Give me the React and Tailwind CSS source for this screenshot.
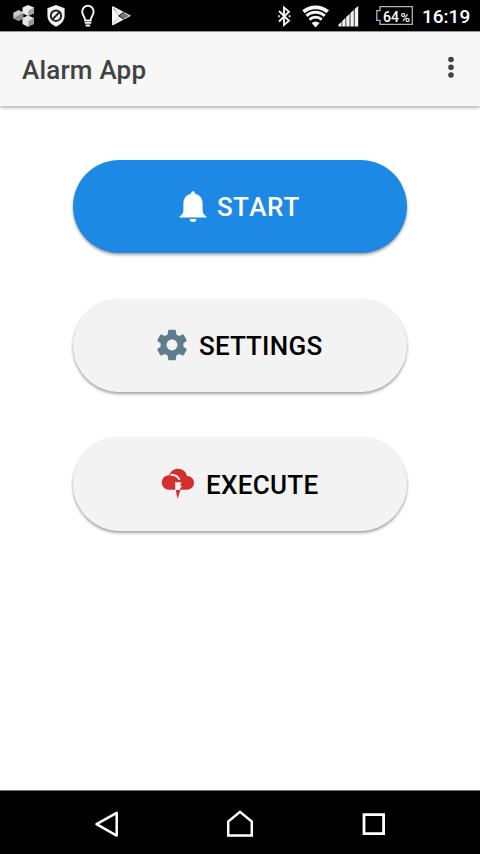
import React from "react";

function StatusBar() {
  return (
    <div className="flex h-8 items-start border-b border-[#999] bg-black text-white">
      <svg className="ml-3 h-[31px] w-6" viewBox="12 0 24 31">
        <path d="M18.500 10l4.800 2.200v6L18.500 21l-5.200-2.800v-5.400z" fill="#c9c9c9" />
        <path d="M13.600 18L23 13v5.200L18.500 21z" fill="#8d8d8d" />
        <path d="M28 5l6 2.500v5.700L28 16l-5.500-2.700V7.500z" fill="#ececec" />
        <path d="M28.500 10.500l5.500-3v5.700L28 16z" fill="#a5a5a5" />
        <path d="M28 15.500l6 2.500v5.800L28 26.800l-5.500-2.800v-6z" fill="#e6e6e6" />
        <path d="M28.500 21l5.500-3v5.800l-6 3z" fill="#999" />
      </svg>
      <svg className="ml-2.5 h-[31px] w-5" viewBox="46 0 20 31">
        <path d="M56 5l8.600 3.200v7.300c0 5-3.600 9-8.600 11.200-5-2.200-8.600-6.200-8.600-11.200V8.200z" fill="#f2f2f2" />
        <circle cx="56" cy="15.700" r="5.200" fill="none" stroke="#222" strokeWidth="2" />
        <path d="M52.600 19.100l6.800-6.800" stroke="#222" strokeWidth="2" />
      </svg>
      <svg className="ml-3 h-[31px] w-5" viewBox="78 0 20 31" fill="none" stroke="#f4f4f4" strokeWidth="1.900">
        <path d="M85.200 20.500c0-3.500-3-5-3-8.800a5.700 5.900 0 0 1 11.400 0c0 3.800-3 5.300-3 8.800zM84.800 22.900h6.400M85.600 25.500h4.600" />
      </svg>
      <svg className="ml-2.5 h-[31px] w-6" viewBox="108 0 24 31">
        <path d="M112 6.800v18L119.500 16z" fill="#fff" />
        <path d="M112.200 6.800L129.200 15.800l-17 9" fill="none" stroke="#eee" strokeWidth="1.700" />
        <path d="M113 7l10.500 6.200-4.500 2.500zM113 24.600l10.500-6-4.500-2.700z" fill="#f4f4f4" />
        <path d="M119 15.800l5-3 5 3-5 3z" fill="#777" />
        <path d="M118.500 15.800l5.500-3.600M118.500 15.800l5.500 3.600" stroke="#222" strokeWidth="1" />
      </svg>
      <svg className="ml-[142px] h-[31px] w-5" viewBox="274 0 20 31" fill="none" stroke="#f2f2f2" strokeWidth="1.900">
        <path d="M279 11l10 9.800-5 4.200V7.500l5 4.200L279 21.500" />
        <path d="M278.200 16.300h1.600M288.700 16.300h1.800" />
      </svg>
      <svg className="ml-1.5 h-[31px] w-[30px]" viewBox="300 0 30 31" fill="none" stroke="#f5f5f5">
        <path d="M303.500 11.800a18.500 18.500 0 0 1 24.200 0" strokeWidth="3.800" />
        <path d="M306.500 15.900a13.200 13.200 0 0 1 18.200 0" strokeWidth="3" />
        <path d="M309.500 19.600a8.800 8.800 0 0 1 12.200 0" strokeWidth="2.900" />
        <path d="M315.600 27.600l-4-4.600q4-3 8 0z" fill="#f5f5f5" stroke="none" />
      </svg>
      <svg className="ml-1.5 h-[31px] w-6" viewBox="336 0 24 31" fill="#f2f2f2">
        <path d="M338.500 26.500v-2l3-2.700v4.700zM342.200 26.500v-5.500l3.300-3.200v8.700zM346.200 26.500v-9.400l3.400-3.300v12.700zM350.400 26.500V13l3.400-3v16.500zM354.600 26.500V9l3.600-2.900v20.400z" />
      </svg>
      <div className="relative ml-4 mt-1.5 flex h-[19px] w-[37px] items-center justify-center">
        <svg className="absolute inset-0 h-[19px] w-[37px]" viewBox="0 0 37 19" fill="none" stroke="#b0b0b0" strokeWidth="1.300">
          <path d="M4 .7h32.300v17.600H4v-4H.8v-9.600H4z" />
        </svg>
        <span className="ml-1 mt-0.5 whitespace-nowrap font-['Roboto'] text-[14px] font-medium leading-none">
          64<span className="ml-[1.500px] text-[13px]">%</span>
        </span>
      </div>
      <span className="ml-[9px] mt-[5px] whitespace-nowrap font-['Roboto'] text-[19px] font-medium leading-[23px]">16:19</span>
    </div>
  );
}

function BellIcon() {
  return (
    <svg className="h-8 w-7" viewBox="179 190.500 28 32" fill="#fff">
      <path d="M193 190.700a2 2 0 0 1 2 2v.6c5 1 7.600 4.800 7.600 10v6.200c0 3.200 1.200 4.800 3.800 6.300v1.200h-26.800v-1.200c2.600-1.500 3.800-3.100 3.800-6.300v-6.200c0-5.200 2.600-9 7.600-10v-.6a2 2 0 0 1 2-2z" />
      <path d="M189.600 218.500h6.800a3.400 3 0 0 1-6.800 0z" />
    </svg>
  );
}

function GearIcon() {
  return (
    <svg className="mb-px h-[38px] w-[38px]" viewBox="0 0 24 24" fill="#607d8b">
      <path d="M19.140 12.940c.04-.3.060-.61.060-.94 0-.32-.02-.64-.07-.94l2.030-1.580c.18-.14.230-.41.120-.61l-1.920-3.320c-.12-.22-.37-.29-.59-.22l-2.390.96c-.5-.38-1.030-.7-1.620-.94l-.36-2.540c-.04-.24-.24-.41-.48-.41h-3.840c-.24 0-.43.170-.47.410l-.36 2.540c-.59.240-1.130.570-1.620.940l-2.390-.96c-.22-.08-.47 0-.59.220L2.740 8.870c-.12.210-.08.470.120.610l2.030 1.580c-.05.300-.09.630-.09.940s.02.640.070.940l-2.030 1.580c-.18.140-.23.410-.12.610l1.920 3.320c.12.220.370.290.590.220l2.390-.96c.5.380 1.030.700 1.620.940l.36 2.540c.05.240.240.410.480.410h3.840c.24 0 .44-.17.470-.41l.36-2.540c.59-.24 1.130-.56 1.620-.94l2.390.96c.22.080.470 0 .59-.22l1.920-3.320c.12-.22.070-.47-.12-.61l-2.010-1.580zM12 15.400c-1.870 0-3.400-1.530-3.400-3.400s1.530-3.400 3.400-3.400 3.400 1.530 3.400 3.400-1.530 3.400-3.400 3.400z" />
    </svg>
  );
}

function StormIcon() {
  return (
    <svg className="h-[34px] w-[34px]" viewBox="161 467 34 34">
      <path d="M169.500 489.700c-4.700 0-7.700-3.200-7.700-7.200 0-4.200 3.200-7.200 7.200-7.300 1.700-4.200 4.900-6.400 8.900-6.400 4.800 0 8.300 3 9 7.300 4.300.1 7.100 3 7.100 6.700 0 4-3 6.900-7.300 6.900z" fill="#d32f2f" />
      <path d="M170.500 474.700c4.600-.2 7.900 2 9 5.300" fill="none" stroke="#f3f3f3" strokeWidth="2" />
      <path d="M175.200 482.300h6.300l-1.400 3.400h1.900l-2.600 4.400h-4.200z" fill="#f3f3f3" />
      <path d="M175.700 490.100h4.800l-2.900 8.600z" fill="#d32f2f" />
    </svg>
  );
}

function PillButton({ className, children }) {
  return (
    <button
      className={
        "flex w-[334px] items-center rounded-full font-['Roboto'] text-[26px] font-medium leading-8 [font-kerning:none] shadow-[0_2px_3px_rgba(0,0,0,0.36),0_0_2px_rgba(0,0,0,0.06)] " +
        className
      }
    >
      {children}
    </button>
  );
}

export default function App() {
  return (
    <div className="flex h-[854px] w-[480px] flex-col overflow-hidden bg-white font-['Roboto',sans-serif]">
      <StatusBar />
      <header className="z-10 flex h-[74px] shrink-0 items-center justify-between bg-[#f7f7f7] pl-[22px] pr-[25px] shadow-[0_2px_3px_rgba(0,0,0,0.28)]">
        <h1 className="mt-0.5 text-[26px] font-medium leading-8 tracking-[0.2px] text-[#424242]">Alarm App</h1>
        <svg className="mb-1 h-6 w-2" viewBox="0 0 8 24" fill="#424242">
          <circle cx="4" cy="4.500" r="2.800" />
          <circle cx="4" cy="12.200" r="2.800" />
          <circle cx="4" cy="20" r="2.800" />
        </svg>
      </header>
      <main className="flex flex-1 flex-col items-center pt-[54px]">
        <PillButton className="h-[93px] bg-[#1e88e5] pl-[106px] text-white">
          <BellIcon />
          <span className="ml-2.5 tracking-[0.35px]">START</span>
        </PillButton>
        <PillButton className="mt-[46px] h-[93px] bg-[#f3f3f3] pl-20 text-black">
          <GearIcon />
          <span className="ml-2 tracking-[0.25px]">SETTINGS</span>
        </PillButton>
        <PillButton className="mt-[45px] h-[94px] bg-[#f3f3f3] pl-[88px] text-black">
          <StormIcon />
          <span className="ml-[11px] mt-px tracking-[0.3px]">EXECUTE</span>
        </PillButton>
      </main>
      <nav className="flex h-16 shrink-0 items-center border-t border-[#777] bg-black">
        <svg className="ml-[92px] h-8 w-8" viewBox="92 807 32 32" fill="none" stroke="#fff" strokeWidth="2.500" strokeLinejoin="round">
          <path d="M96.500 824.200L116.700 812.800v22.800z" />
        </svg>
        <svg className="ml-[100px] h-8 w-8" viewBox="224 807 32 32" fill="none" stroke="#fff" strokeWidth="2.500">
          <path d="M228.200 835.500V821.500L240 811.800l11.800 9.700v14z" />
        </svg>
        <svg className="ml-[102px] h-8 w-8" viewBox="358 807 32 32" fill="none" stroke="#fff" strokeWidth="2.800">
          <path d="M364 814.700h19.600v19H364z" />
        </svg>
      </nav>
    </div>
  );
}
